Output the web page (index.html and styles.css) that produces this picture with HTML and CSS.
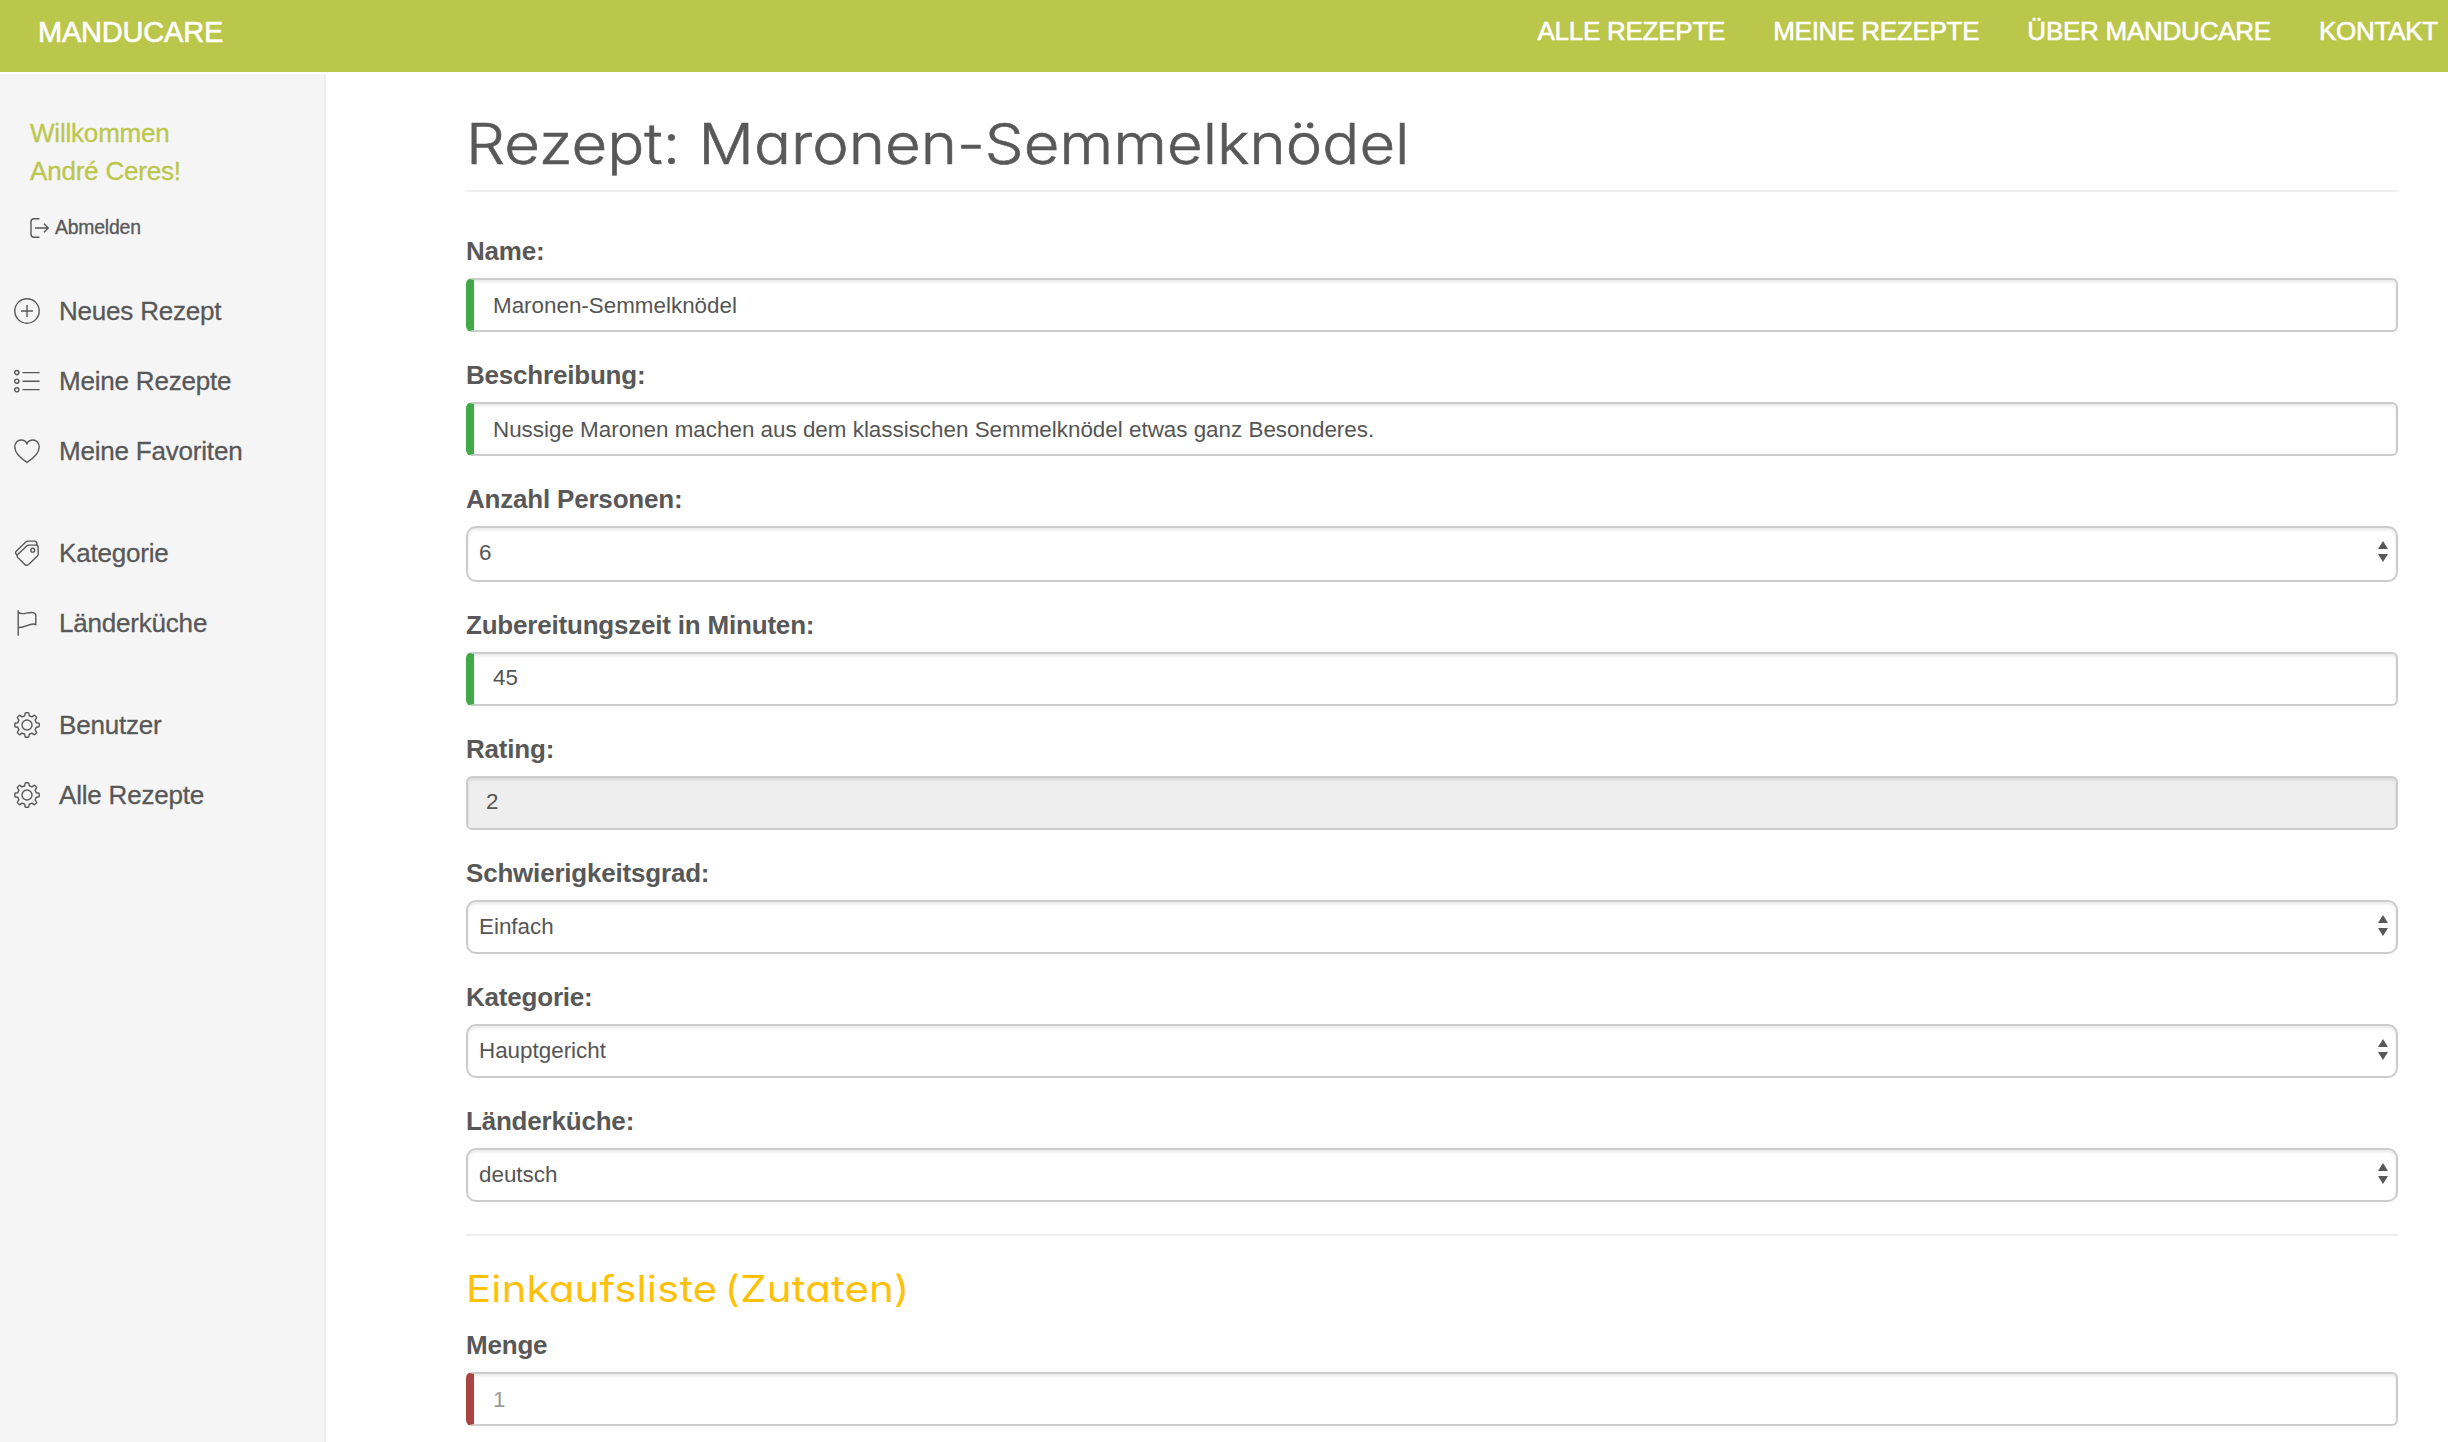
FILE: index.html
```html
<!DOCTYPE html>
<html lang="de">
<head>
<meta charset="utf-8">
<title>Manducare</title>
<link rel="stylesheet" href="styles.css">
</head>
<body>
<svg class="sprite" aria-hidden="true">
  <symbol id="gear" viewBox="0 0 26 26">
    <path d="M10.8 3.7 L11 1.7 Q11.1.8 12 .8 H14 Q14.9.8 15 1.7 L15.2 3.7 L18 4.9 L19.6 3.6 Q20.3 3 21 3.7 L22.3 5 Q23 5.7 22.4 6.4 L21.1 8 L22.3 10.8 L24.3 11 Q25.2 11.1 25.2 12 V14 Q25.2 14.9 24.3 15 L22.3 15.2 L21.1 18 L22.4 19.6 Q23 20.3 22.3 21 L21 22.3 Q20.3 23 19.6 22.4 L18 21.1 L15.2 22.3 L15 24.3 Q14.9 25.2 14 25.2 H12 Q11.1 25.2 11 24.3 L10.8 22.3 L8 21.1 L6.4 22.4 Q5.7 23 5 22.3 L3.7 21 Q3 20.3 3.6 19.6 L4.9 18 L3.7 15.2 L1.7 15 Q.8 14.9.8 14 V12 Q.8 11.1 1.7 11 L3.7 10.8 L4.9 8 L3.6 6.4 Q3 5.7 3.7 5 L5 3.7 Q5.7 3 6.4 3.6 L8 4.9 Z"/>
    <circle cx="13" cy="13" r="5"/>
  </symbol>
  <symbol id="arrows" viewBox="0 0 10 21">
    <path d="M5 0L10 8H0zM0 13H10L5 21z"/>
  </symbol>
</svg>
<header class="topbar">
  <a class="brand">MANDUCARE</a>
  <nav class="topnav">
    <a>ALLE REZEPTE</a>
    <a>MEINE REZEPTE</a>
    <a>ÜBER MANDUCARE</a>
    <a>KONTAKT</a>
  </nav>
</header>
<div class="page">
  <aside class="sidebar">
    <p class="welcome">Willkommen<br>André Ceres!</p>
    <a class="logout">
      <svg class="logout-icon" viewBox="0 0 20 20"><path d="M9.5.8H4Q1 .8 1 3.8V16.2Q1 19.2 4 19.2H9.5M5 10H18.3M14 5.7L18.3 10L14 14.3"/></svg>
      <span>Abmelden</span>
    </a>
    <ul class="menu">
      <li><svg class="icon" viewBox="0 0 26 26"><circle cx="13" cy="13" r="12.2"/><path d="M13 7V19M7 13H19"/></svg>Neues Rezept</li>
      <li><svg class="icon" viewBox="0 0 26 26"><circle cx="2.8" cy="4.6" r="2.1"/><circle cx="2.8" cy="13.2" r="2.1"/><circle cx="2.8" cy="21.8" r="2.1"/><path d="M8.5 4.6H25.6M8.5 13.2H25.6M8.5 21.6H25.6"/></svg>Meine Rezepte</li>
      <li><svg class="icon" viewBox="0 0 26 26"><path d="M13 24.4C8.5 21.5.8 16.5.8 9C.8 5 3.5 2 7 2C9.8 2 12 3.4 13 5.6C14 3.4 16.2 2 19 2C22.5 2 25.2 5 25.2 9C25.2 16.5 17.5 21.5 13 24.4Z"/></svg>Meine Favoriten</li>
    </ul>
    <ul class="menu">
      <li><svg class="icon" viewBox="0 0 26 26"><path d="M14.6 5.1H22Q24.2 5.1 24.2 7.5V14.2Q24.2 15.3 23.4 16.1L14.6 24.5Q12.6 26.2 10.8 24.5L4 17.8Q2.3 16 4 14.3L12.7 5.9Q13.5 5.1 14.6 5.1ZM3.4 15.9L2.3 14.3Q.9 12.6 2.5 11L11.8 2Q12.8 1.1 14 1.1H20.5Q22.8 1.1 22.9 3.4L23 5.2"/><circle cx="18.8" cy="10.2" r="1.9"/></svg>Kategorie</li>
      <li><svg class="icon" viewBox="0 0 26 26"><path d="M4.2.3V25.8M4.2 2.3C8 6 14 1.5 19 2.6Q21.8 3.2 21.8 5.5V14.5C16 12 11 18.5 4.2 17.4"/></svg>Länderküche</li>
    </ul>
    <ul class="menu">
      <li><svg class="icon"><use href="#gear"/></svg>Benutzer</li>
      <li><svg class="icon"><use href="#gear"/></svg>Alle Rezepte</li>
    </ul>
  </aside>
  <main class="content">
    <h1 class="title"><span>Rezept: Maronen-Semmelknödel</span></h1>
    <form class="fields">
      <label class="field"><span class="label">Name:</span>
        <input class="control valid" value="Maronen-Semmelknödel"></label>
      <label class="field"><span class="label">Beschreibung:</span>
        <input class="control valid" value="Nussige Maronen machen aus dem klassischen Semmelknödel etwas ganz Besonderes."></label>
      <label class="field"><span class="label">Anzahl Personen:</span>
        <span class="select"><select class="control tall"><option>6</option></select><svg class="arrows"><use href="#arrows"/></svg></span></label>
      <label class="field"><span class="label">Zubereitungszeit in Minuten:</span>
        <input class="control valid number" value="45"></label>
      <label class="field"><span class="label">Rating:</span>
        <input class="control number" value="2" disabled></label>
      <label class="field"><span class="label">Schwierigkeitsgrad:</span>
        <span class="select"><select class="control"><option>Einfach</option></select><svg class="arrows"><use href="#arrows"/></svg></span></label>
      <label class="field"><span class="label">Kategorie:</span>
        <span class="select"><select class="control"><option>Hauptgericht</option></select><svg class="arrows"><use href="#arrows"/></svg></span></label>
      <label class="field"><span class="label">Länderküche:</span>
        <span class="select"><select class="control"><option>deutsch</option></select><svg class="arrows"><use href="#arrows"/></svg></span></label>
    </form>
    <section class="ingredients">
      <h2 class="subtitle"><span>Einkaufsliste (Zutaten)</span></h2>
      <label class="field"><span class="label">Menge</span>
        <input class="control invalid" placeholder="1"></label>
    </section>
  </main>
</div>
</body>
</html>
```
FILE: styles.css
```css
* { box-sizing: border-box; }
body {
  margin: 0;
  height: 1442px;
  overflow: hidden;
  display: flex;
  flex-direction: column;
  background: #fff;
  color: #585858;
  font-family: "Liberation Sans", Arial, sans-serif;
  font-size: 26px;
}
.sprite { display: none; }

.topbar {
  flex: none;
  height: 72px;
  margin-bottom: 2px;
  padding: 0 10px 0 38px;
  display: flex;
  justify-content: space-between;
  align-items: flex-start;
  background: #bbc74b;
  color: #fff;
  -webkit-text-stroke: 0.6px #fff;
}
.brand { font-size: 29px; line-height: 64px; letter-spacing: -0.2px; }
.topnav { display: flex; gap: 48px; line-height: 62px; letter-spacing: -0.25px; }

.page { flex: 1; min-height: 0; display: flex; }
.sidebar {
  flex: none;
  width: 326px;
  padding-top: 40px;
  background: #f5f5f5;
  border-right: 2px solid #eee;
  letter-spacing: -0.2px;
  -webkit-text-stroke: 0.3px;
}
.welcome { margin: 0 0 0 30px; line-height: 38px; color: #bbc74b; }
.logout {
  display: flex;
  align-items: center;
  gap: 5px;
  margin: 18px 0 29px 30px;
  height: 39px;
  font-size: 19.4px;
}
.logout-icon { width: 20px; height: 20px; }
.logout-icon, .icon { fill: none; stroke: #585858; stroke-width: 1.4; }
.menu { list-style: none; margin: 0 0 32px; padding: 0 0 0 14px; }
.menu li { display: flex; align-items: center; gap: 19px; height: 70px; }
.icon { width: 26px; height: 26px; }

.content { flex: 1; padding: 35px 50px 0 140px; }
.title, .subtitle { margin: 0; font-family: Inter, sans-serif; font-feature-settings: "cv11", "ss03"; white-space: nowrap; }
.title span, .subtitle span { display: inline-block; transform-origin: 0 50%; }
.title span { transform: scaleX(1.1); }
.subtitle span { transform: scaleX(1.135); }
.title {
  height: 83px;
  margin-bottom: 41px;
  border-bottom: 2px solid #eee;
  font-size: 56px;
  font-weight: 350;
  line-height: 70px;
  word-spacing: 1px;
  -webkit-text-stroke: 0.6px;
}
.fields { display: flex; flex-direction: column; gap: 25px; margin-bottom: 32px; }
.field { display: block; }
.label { display: block; height: 45px; line-height: 36px; font-weight: 700; letter-spacing: -0.2px; }
.control {
  display: block;
  width: 100%;
  height: 54px;
  margin: 0;
  padding: 2px 19px 0;
  appearance: none;
  border: 2px solid #ccc;
  border-radius: 6px;
  box-shadow: inset 0 2px 3px rgba(0, 0, 0, 0.09);
  background: #fff;
  color: #555;
  font: 22.4px "Liberation Sans", Arial, sans-serif;
  outline: 0;
}
.control::placeholder { color: #999; opacity: 1; }
.control:disabled { background: #eee; opacity: 1; padding-left: 18px; }
.valid { border-left: 8px solid #42a948; }
.invalid { border-left: 8px solid #a94442; }
.number { padding: 0 19px 2px; }
.select { display: grid; align-items: start; }
.select > * { grid-area: 1 / 1; }
.select .control { border-radius: 10px; padding: 0 11px 2px; }
.select .tall { height: 56px; padding-bottom: 4px; }
.arrows { justify-self: end; width: 10px; height: 21px; margin: 15px 10px 0 0; fill: #585858; }

.ingredients { padding-top: 28px; border-top: 2px solid #eee; }
.subtitle {
  margin-bottom: 13px;
  color: #ffc107;
  font-size: 37px;
  font-weight: 400;
  line-height: 50px;
  word-spacing: -4px;
  letter-spacing: 0.1px;
}
```
